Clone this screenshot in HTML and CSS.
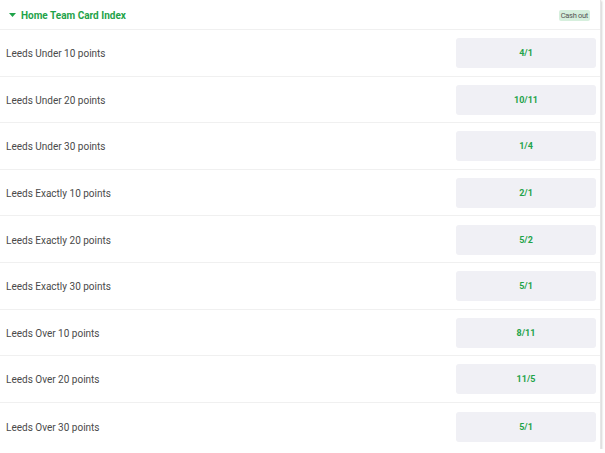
FILE: index.html
```html
<!DOCTYPE html>
<html>
<head>
<meta charset="utf-8">
<link rel="stylesheet" href="styles.css">
</head>
<body>
<div class="card">
  <div class="header">
    <div class="title">
      <svg class="caret" width="7" height="4" viewBox="0 0 7 4"><polygon points="0,0 7,0 3.5,4" fill="#1fa34a"/></svg>
      <span>Home Team Card Index</span>
    </div>
    <span class="badge">Cash out</span>
  </div>
  <div class="row"><span class="label">Leeds Under 10 points</span><div class="odd">4/1</div></div>
  <div class="row"><span class="label">Leeds Under 20 points</span><div class="odd">10/11</div></div>
  <div class="row"><span class="label">Leeds Under 30 points</span><div class="odd">1/4</div></div>
  <div class="row"><span class="label">Leeds Exactly 10 points</span><div class="odd">2/1</div></div>
  <div class="row"><span class="label">Leeds Exactly 20 points</span><div class="odd">5/2</div></div>
  <div class="row"><span class="label">Leeds Exactly 30 points</span><div class="odd">5/1</div></div>
  <div class="row"><span class="label">Leeds Over 10 points</span><div class="odd">8/11</div></div>
  <div class="row"><span class="label">Leeds Over 20 points</span><div class="odd">11/5</div></div>
  <div class="row"><span class="label">Leeds Over 30 points</span><div class="odd">5/1</div></div>
</div>
</body>
</html>
```
FILE: styles.css
```css
html, body {
  margin: 0;
  padding: 0;
  background: #ffffff;
  font-family: Roboto, "Liberation Sans", Arial, sans-serif;
}
.card {
  width: 601px;
  background: #fff;
  box-shadow: 1px 1px 2px rgba(0,0,0,0.18);
  border-right: 1px solid #e6e6e6;
  box-sizing: border-box;
}
.header {
  height: 30px;
  box-sizing: border-box;
  border-bottom: 1px solid #f0f0f0;
  display: flex;
  align-items: center;
  justify-content: space-between;
  padding: 1px 10px 0 9px;
}
.title {
  display: flex;
  align-items: center;
  gap: 5px;
  color: #1fa34a;
  font-weight: 700;
  font-size: 10px;
}
.badge {
  background: #d6efdd;
  color: #555;
  font-size: 7.5px;
  padding: 1px 2px;
  border-radius: 2px;
  line-height: 9px;
  letter-spacing: -0.3px;
}
.row {
  height: 46.6px;
  box-sizing: border-box;
  border-bottom: 1px solid #f0f0f0;
  display: flex;
  align-items: center;
  justify-content: space-between;
  padding: 0 4px 0 6px;
}
.row:last-child {
  border-bottom: none;
}
.label {
  font-size: 10px;
  color: #4a4a4a;
  padding-top: 2px;
}
.odd {
  width: 140px;
  height: 30px;
  margin-top: 1px;
  background: #f0f0f5;
  border-radius: 3px;
  display: flex;
  align-items: center;
  justify-content: center;
  color: #1fa34a;
  font-weight: 700;
  font-size: 9px;
}
```
